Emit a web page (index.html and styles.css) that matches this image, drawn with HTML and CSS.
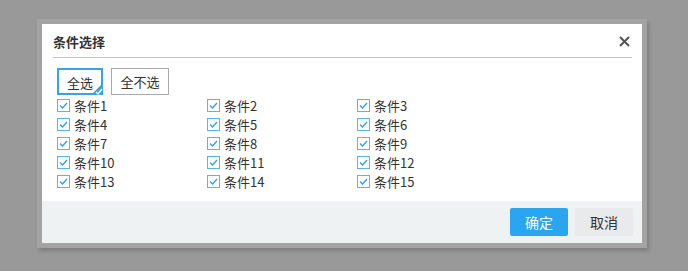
FILE: index.html
```html
<!DOCTYPE html>
<html lang="zh">
<head>
<meta charset="utf-8">
<title>条件选择</title>
<link rel="stylesheet" href="styles.css">
</head>
<body>
<div class="frame">
  <div class="dialog">
    <div class="header">
      <span class="title">条件选择</span>
      <span class="close"><svg width="11" height="11" viewBox="0 0 11 11"><path d="M1 1 L10 10 M10 1 L1 10" stroke="#555" stroke-width="2" fill="none"/></svg></span>
    </div>
    <div class="content">
      <div class="toolbar">
        <button class="btn-sel active">全选<span class="corner"><svg width="10" height="8" viewBox="0 0 10 8"><path d="M3 5 L5 7 L9 2" fill="none" stroke="#fff" stroke-width="1.3"/></svg></span></button>
        <button class="btn-sel wide">全不选</button>
      </div>
      <div class="grid">
        <label class="item"><span class="cb"></span>条件1</label>
        <label class="item"><span class="cb"></span>条件2</label>
        <label class="item"><span class="cb"></span>条件3</label>
        <label class="item"><span class="cb"></span>条件4</label>
        <label class="item"><span class="cb"></span>条件5</label>
        <label class="item"><span class="cb"></span>条件6</label>
        <label class="item"><span class="cb"></span>条件7</label>
        <label class="item"><span class="cb"></span>条件8</label>
        <label class="item"><span class="cb"></span>条件9</label>
        <label class="item"><span class="cb"></span>条件10</label>
        <label class="item"><span class="cb"></span>条件11</label>
        <label class="item"><span class="cb"></span>条件12</label>
        <label class="item"><span class="cb"></span>条件13</label>
        <label class="item"><span class="cb"></span>条件14</label>
        <label class="item"><span class="cb"></span>条件15</label>
      </div>
    </div>
    <div class="footer">
      <button class="btn ok">确定</button>
      <button class="btn cancel">取消</button>
    </div>
  </div>
</div>
</body>
</html>
```
FILE: styles.css
```css
html, body {
  margin: 0;
  padding: 0;
  background: #999999;
  height: 100%;
}
body {
  padding: 19px 0 0 37px;
  box-sizing: border-box;
  font-family: "Noto Sans CJK SC", "Noto Sans", sans-serif;
  color: #333;
}
.frame {
  width: 600px;
  border: 5px solid #a3a3a3;
  box-shadow: 2px 3px 4px rgba(0,0,0,0.18);
}
.dialog {
  background: #fff;
  display: flex;
  flex-direction: column;
}
.header {
  margin: 0 10px 0 11px;
  height: 33px;
  border-bottom: 1px solid #c4c4c4;
  display: flex;
  align-items: center;
  justify-content: space-between;
}
.title {
  font-size: 13px;
  font-weight: bold;
  color: #333;
  line-height: 16px;
  padding-top: 2px;
}
.close {
  display: flex;
  margin-right: 2px;
  margin-top: 1px;
}
.content {
  padding: 10px 15px 10px 15px;
}
.toolbar {
  display: flex;
  gap: 8px;
  height: 28px;
}
.btn-sel {
  position: relative;
  box-sizing: border-box;
  height: 27px;
  padding: 0;
  border: 1px solid #aaa;
  background: #fff;
  font-family: inherit;
  font-size: 13px;
  color: #333;
  line-height: 25px;
  cursor: pointer;
}
.btn-sel.wide {
  width: 58px;
}
.btn-sel.active {
  width: 46px;
  border: 2px solid #3aa3e6;
}
.corner {
  position: absolute;
  right: -2px;
  bottom: -2px;
  width: 0;
  height: 0;
  border-left: 12px solid transparent;
  border-bottom: 12px solid #3aa3e6;
}
.corner svg {
  position: absolute;
  left: -10px;
  top: 4px;
}
.grid {
  display: grid;
  grid-template-columns: 150px 150px 150px;
  grid-auto-rows: 19px;
}
.item {
  display: flex;
  align-items: center;
  font-size: 13px;
  color: #333;
  line-height: 19px;
}
.cb {
  box-sizing: border-box;
  width: 13px;
  height: 13px;
  border: 1px solid #5ab4ef;
  margin-right: 4px;
  background: #fff url("data:image/svg+xml;utf8,<svg xmlns='http://www.w3.org/2000/svg' width='11' height='11' viewBox='0 0 11 11'><path d='M2 5.5 L4.5 8 L9 3' fill='none' stroke='%2332a0e8' stroke-width='1.4'/></svg>") center/11px 11px no-repeat;
}
.footer {
  background: #eff2f3;
  height: 42px;
  display: flex;
  justify-content: flex-end;
  align-items: center;
  gap: 7px;
  padding-right: 9px;
}
.btn {
  height: 28px;
  width: 58px;
  border: none;
  border-radius: 2px;
  font-family: inherit;
  font-size: 14px;
  cursor: pointer;
}
.ok {
  background: #2aa6f0;
  color: #fff;
}
.cancel {
  background: #e9eaeb;
  color: #333;
}
```
